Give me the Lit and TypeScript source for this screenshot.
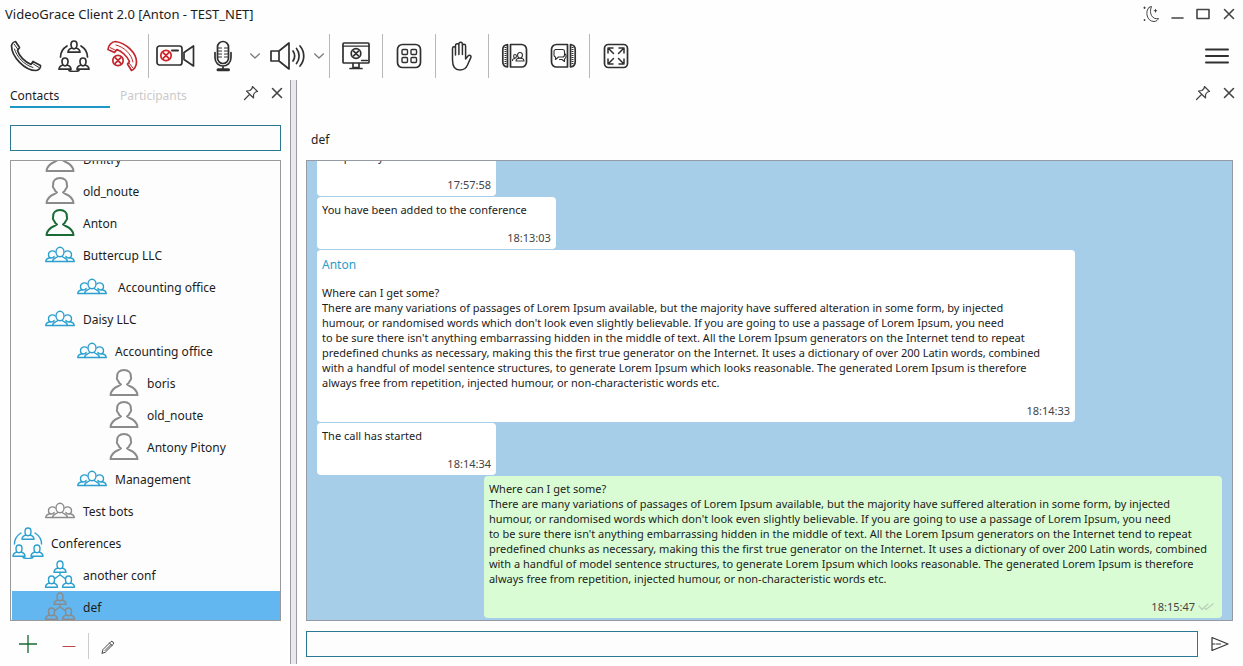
import { LitElement, html, svg, css } from "lit";
import { customElement, state } from "lit/decorators.js";
import { classMap } from "lit/directives/class-map.js";

/* A small head-and-shoulders figure; (x, y) is the top centre of the head. */
const bust = (x: number, y: number) => svg`
  <path d="M${x} ${y}c2 0 3 1.5 3 3.6c0 2.2-1.2 4.2-3 4.2s-3-2-3-4.2c0-2.1 1-3.6 3-3.6z
  M${x - 2} ${y + 7}c-2.200.500-3.800 1.400-4 4.200h12c-.2-2.800-1.800-3.700-4-4.200"/>`;

const cross = (x: number, y: number, r: number) => svg`
  <circle cx=${x} cy=${y} r=${r}/>
  <path d="M${x - r / 2} ${y - r / 2}l${r} ${r}m0 ${-r}l${-r} ${r}"/>`;

const icons: Record<string, [number, number, unknown]> = {
  call: [32, 32, svg`<path d="M5.500 1.500L9.500 7.500L7.500 10.500C9 16 15 22 21 24.500L23 21.500L30.500 25.500C31 27.500 29 30.500 26 30.500C15 30.500 1.500 17 1.500 5.500C2 3.500 4 1.500 5.500 1.500z"/><path stroke-width="1" d="M4.500 9C6.500 16.500 14 25 23 27.500M4 4L8 9.500M22.500 23.500L29 27.500"/>`],
  conference: [32, 32, svg`${bust(16, 1)}${bust(7, 18)}${bust(25, 18)}<path d="M9 6C5 8.500 2.500 12 2.500 17M23 6C27 8.500 29.500 12 29.500 17M11 30.500C14 31.800 18 31.800 21 30.500"/>`],
  hangup: [32, 32, svg`<path d="M2 9.500C2 5.500 6 1.500 9.500 1.500C20 3 30.500 13 30.500 22C30.500 26 28 30 25.500 30.500L21.500 24L23.500 21.500C21 16 15.500 11 11 9.500L8.500 12.500z"/><path stroke-width="1" d="M10 5C18 7 25.500 14 27 22M4 7.500L10 10.500M23 23L27 28"/>${cross(12, 20.500, 5.200)}`],
  camera: [40, 32, svg`<rect x="2" y="6" width="25" height="19" rx="2.500"/><path d="M29 12.500L38.500 6V26L29 19.500z"/><path stroke-width="2" d="M17 10.500h6"/><g stroke="#cf2329">${cross(11, 15.500, 5.200)}</g>`],
  mic: [32, 32, svg`<rect x="10.500" y="1.500" width="11" height="22" rx="5.500"/><path d="M8 12.500v5C8 23 12 26 16 26S24 23 24 17.500V12.500M16 26V30"/><path stroke-width="1.200" d="M11 8h3.500M11 11h3.500M11 14h3.500M11 17h3.500M17.500 8H21M17.500 11H21M17.500 14H21M17.500 17H21"/><path stroke-width="3" d="M11 29.800h10.500"/>`],
  speaker: [36, 32, svg`<path d="M2 11h8L20 3v26L10 21H2zM10 11v10M24 11C26 14 26 18 24 21M27.500 8.500C31 13 31 19 27.500 23.500M31 6C36 12 36 20 31 26"/>`],
  chevron: [10, 6, svg`<path d="M.5 .8L5 5L9.500 .8"/>`],
  screen: [32, 32, svg`<rect x="3" y="3" width="26" height="20" rx="1"/><path d="M3 6.200h26" stroke-width="1.200"/><path d="M13 23.500v4h6v-4M10 28.500h12"/><path stroke-width="1.400" d="M21.500 20.500h6"/>${cross(16, 13.500, 4.800)}`],
  grid: [32, 32, svg`<rect x="4.500" y="4.500" width="23" height="23" rx="5"/><g stroke-width="1.400"><rect x="9" y="9.500" width="5.500" height="5" rx="1"/><rect x="18" y="9.500" width="5.500" height="5" rx="1"/><rect x="9" y="17.500" width="5.500" height="5" rx="1"/><rect x="18" y="17.500" width="5.500" height="5" rx="1"/></g>`],
  hand: [32, 32, svg`<path stroke-width="1.500" d="M6.500 20V8.500c0-2.200 3-2.200 3 0V15V5.500c0-2.400 3.400-2.400 3.400 0V14.500V4c0-2.400 3.500-2.400 3.500 0v10.500V6c0-2.300 3.200-2.300 3.200 0v13l2.200-2.800c1.400-1.600 4-.8 3 1.400L21.500 25c-1.500 3.500-4 5-7.500 5c-5 0-7.500-4-7.500-10z"/>`],
  book: [32, 32, svg`<path d="M11.500 4.500H22.500a5 5 0 0 1 5 5v12.500a5 5 0 0 1-5 5H11.500zM8.500 4.500C5 5 3.800 7 3.800 9.500v12.500C3.800 24.500 5 26.500 8.500 27z"/><path stroke-width="2" stroke-linecap="butt" stroke-dasharray="1 1" d="M6.500 7v18"/><path stroke-width="1.100" d="M21 12.500c3.500 0 3 5.500 0 5.500s-3.500-5.500 0-5.500zM17 21c0-2 1.500-2.800 4-2.800s4 .8 4 2.800zM16 14.500c2 0 1.800 3.500 0 3.500s-1.800-3.500 0-3.500zM13.500 20.500c0-1.200.8-2 2.500-2"/>`],
  chat: [32, 32, svg`<path d="M20.500 4.500H9.500a5 5 0 0 0-5 5v12.500a5 5 0 0 0 5 5h11zM23.500 4.500C27 5 28.200 7 28.200 9.500v12.500C28.200 24.500 27 26.500 23.500 27z"/><path stroke-width="2" stroke-linecap="butt" stroke-dasharray="1 1" d="M25.500 7v18"/><path stroke-width="1.100" d="M8.500 9.500h7a2 2 0 0 1 2 2v3.500a2 2 0 0 1-2 2H11.500l-3 2.500V17a2 2 0 0 1-1.500-2v-3.500a2 2 0 0 1 1.500-2zM17.500 13.500c2.200.5 2 5 0 5.500v2.500l-2.500-2h-2.500"/>`],
  expand: [32, 32, svg`<rect x="4.500" y="4.500" width="23" height="23" rx="4"/><path stroke-width="1.500" d="M13.500 13.500L8 8M8 13V8h5M18.500 13.500L24 8M19 8h5v5M13.500 18.500L8 24M8 19v5h5M18.500 18.500L24 24M24 19v5h-5"/>`],
  menu: [24, 16, svg`<path d="M1 1.500h22M1 8h22M1 14.500h22"/>`],
  moon: [18, 18, svg`<path d="M7 2.500C2.500 6.500 5 16.500 12 16.500C14.500 16.500 16 14.800 16.500 13.500C10.500 15 6.500 8.500 9.500 1.500C8.500 1.600 7.600 2 7 2.500M2.500 2v1.500M1.800 2.800h1.500M13.500 4.500v2.500M12.200 5.700h2.500M2.500 14.500v1M2 15h1"/>`],
  minimize: [14, 14, svg`<path d="M2 11h11"/>`],
  maximize: [14, 14, svg`<rect x="1" y="2.500" width="12" height="9"/>`],
  close: [14, 14, svg`<path d="M2.500 2.500L11.500 11.500M11.500 2.500L2.500 11.500"/>`],
  pin: [16, 16, svg`<path d="M9.500 1.500L14.500 6.500L12.500 7L10.500 9.500L10.500 13L3.500 6L7 5.500L9 3.500zM6.500 9.500L1.500 14.500"/>`],
  user: [32, 32, svg`<path d="M16 3c4.800 0 7 3 6.800 6.200c0 1.300.7 1.300.2 2.800c-.4 1.200-.8 1-1.300 2.200C21 16 20 17 19 17.500c1.500 2 9.500 2 10.500 10.500h-27C3.500 19.500 11.500 19.500 13 17.500C12 17 11 16 10.300 14.200C9.800 13 9.400 13.200 9 12c-.5-1.500.2-1.500.2-2.800C9 6 11.200 3 16 3z"/>`],
  group: [32, 32, svg`<ellipse cx="16" cy="13" rx="4" ry="4.800"/><path d="M13.500 17.500c0 1.500-4.500 1-5 5h15c-.5-4-5-3.500-5-5"/><path d="M11 12.800C9 11 4.500 12 4.500 15.500c0 2 1.300 3.500 3 3.500c1.200 0 2-.6 2.600-1.600M6 18.800c-2.500.4-4 1-4.300 3.700h6.800M21 12.800C23 11 27.500 12 27.500 15.500c0 2-1.300 3.500-3 3.500c-1.200 0-2-.6-2.600-1.600M26 18.800c2.500.4 4 1 4.300 3.700h-6.800"/>`],
  room: [32, 32, svg`${bust(16, 2)}${bust(7.500, 17)}${bust(24.500, 17)}<path d="M16 13.500V16M15 16.500l-4 3M17 16.500l4 3" stroke-dasharray="2.500 1"/>`],
  add: [18, 18, svg`<path d="M0 9h18M9 0v18"/>`],
  remove: [14, 14, svg`<path d="M1 7.500h12"/>`],
  edit: [14, 14, svg`<path d="M1 13L2 9.500L10 1.500C11 .5 13.500 3 12.500 4L4.500 12zM8.500 3l2.500 2.500M4 10.500L10 4.500"/>`],
  send: [18, 16, svg`<path d="M1 1.500L17 8L1 14.500zM1 8h3M5.500 8h4"/>`],
  ticks: [16, 8, svg`<path d="M1 3l3 3.500L10 1M7 5.500L8 6.500L15 1"/>`],
};

const icon = (name: string) => {
  const [w, h, art] = icons[name];
  return html`<svg class="icon ${name}" width=${w} height=${h} viewBox="0 0 ${w} ${h}" aria-hidden="true">${art}</svg>`;
};

interface Entry { level: number; icon: string; tone: string; label: string; }
interface Message { author?: string; text: string; time: string; own?: boolean; }

const entries: Entry[] = [
  { level: 1, icon: "user", tone: "gray", label: "Dmitry" },
  { level: 1, icon: "user", tone: "gray", label: "old_noute" },
  { level: 1, icon: "user", tone: "green", label: "Anton" },
  { level: 1, icon: "group", tone: "blue", label: "Buttercup LLC" },
  { level: 2, icon: "group", tone: "blue", label: " Accounting office" },
  { level: 1, icon: "group", tone: "blue", label: "Daisy LLC" },
  { level: 2, icon: "group", tone: "blue", label: "Accounting office" },
  { level: 3, icon: "user", tone: "gray", label: "boris" },
  { level: 3, icon: "user", tone: "gray", label: "old_noute" },
  { level: 3, icon: "user", tone: "gray", label: "Antony Pitony" },
  { level: 2, icon: "group", tone: "blue", label: "Management" },
  { level: 1, icon: "group", tone: "gray", label: "Test bots" },
  { level: 0, icon: "conference", tone: "blue", label: "Conferences" },
  { level: 1, icon: "room", tone: "blue", label: "another conf" },
  { level: 1, icon: "room", tone: "gray", label: "def" },
];

const passage = `Where can I get some?
There are many variations of passages of Lorem Ipsum available, but the majority have suffered alteration in some form, by injected
humour, or randomised words which don't look even slightly believable. If you are going to use a passage of Lorem Ipsum, you need
to be sure there isn't anything embarrassing hidden in the middle of text. All the Lorem Ipsum generators on the Internet tend to repeat
predefined chunks as necessary, making this the first true generator on the Internet. It uses a dictionary of over 200 Latin words, combined
with a handful of model sentence structures, to generate Lorem Ipsum which looks reasonable. The generated Lorem Ipsum is therefore
always free from repetition, injected humour, or non-characteristic words etc.`;

const messages: Message[] = [
  { text: "Temporarily", time: "17:57:58" },
  { text: "You have been added to the conference", time: "18:13:03" },
  { author: "Anton", text: passage, time: "18:14:33" },
  { text: "The call has started", time: "18:14:34" },
  { text: passage, time: "18:15:47", own: true },
];

@customElement("app-root")
export class AppRoot extends LitElement {
  @state() private selected = entries.length - 1;

  static styles = css`
    :host {
      display: flex;
      flex-direction: column;
      height: 100vh;
      overflow: hidden;
      background: #fefefe;
      color: #1c1c1c;
      font: 12px/16px "Noto Sans", "Open Sans", sans-serif;
    }
    * { box-sizing: border-box; }
    button {
      display: flex;
      align-items: center;
      justify-content: center;
      padding: 0;
      border: 0;
      background: none;
      color: inherit;
      font: inherit;
    }
    .icon { display: block; flex: none; fill: none; stroke: currentColor; stroke-width: 1.7; stroke-linecap: round; stroke-linejoin: round; }
    .chevron { stroke-width: 1.2; color: #777; }
    .minimize, .maximize, .close { stroke-width: 1.6; }
    .pin, .send { stroke-width: 1.2; }
    .moon, .edit, .remove { stroke-width: 1; }
    .add, .ticks { stroke-width: 1.3; }
    .menu { stroke-width: 2; }

    .titlebar { display: flex; align-items: center; height: 28px; flex: none; padding: 0 1px 0 5px; }
    .title { flex: 1; margin: 0; font: inherit; font-size: 13px; }
    .small { width: 26px; height: 26px; color: #444; }

    .toolbar { display: flex; align-items: center; height: 52px; flex: none; padding: 4px 2px 0; color: #303030; }
    .tool { width: 48px; height: 48px; }
    .drop { width: 16px; height: 48px; }
    .hang { color: #c0262c; }
    .rule { width: 1px; height: 44px; margin: 0 2px; background: #b8b8b8; }
    .spacer { flex: 1; }

    .main { display: grid; grid-template-columns: 290px 7px minmax(0, 1fr); flex: 1; min-height: 0; }
    .panel { display: flex; flex-direction: column; min-width: 0; min-height: 0; }
    .splitter { margin-bottom: 2px; border: solid #9c9ca2; border-width: 0 1px; background: #e9e9ee; }
    .head { display: flex; height: 28px; flex: none; }
    .head.left { padding-left: 10px; }
    .head.right { padding-right: 1px; justify-content: flex-end; }
    .tabs { display: flex; flex: 1; gap: 10px; }
    .tab { width: 100px; justify-content: flex-start; border-bottom: 2px solid transparent; padding-top: 6px; }
    .tab.on { border-color: #1f97c4; }
    .tab.off { color: #cacaca; }
    .field { height: 26px; border: 1px solid #2b7890; background: #fdfdfe; padding: 0 5px; font: inherit; color: inherit; outline: none; min-width: 0; }
    .search { margin: 17px 9px 9px 10px; flex: none; }

    .tree {
      flex: 1;
      min-height: 0;
      margin: 0 9px 0 10px;
      padding: 0 0 0 1px;
      border: 1px solid #9a9a9a;
      background: #fdfdfd;
      list-style: none;
      overflow: auto;
      scrollbar-width: none;
    }
    .row { width: 100%; height: 32px; justify-content: flex-start; gap: 7px; white-space: pre; }
    .row.on { background: #62b7f1; }
    .indent { display: flex; }
    .label { padding-top: 2px; }
    .gray { color: #8b8b8b; }
    .green { color: #1a6b36; }
    .blue { color: #2ba0cf; }
    .row .icon { stroke-width: 1.4; }
    .row .user { stroke-width: 2; }

    .actions { display: flex; align-items: center; height: 45px; flex: none; padding-left: 9px; }
    .action { width: 38px; height: 44px; }
    .action.plus { color: #14692f; }
    .action.minus { width: 42px; padding: 4px 0 0 2px; color: #b8474b; }
    .actions .rule { height: 26px; margin: 5px 0 0 -1px; background: #ccc; }
    .action.pen { padding-top: 6px; color: #444; }

    .topic { height: 52px; flex: none; margin: 0; padding: 24px 14px 0; font: inherit; }
    .chatlog {
      flex: 1;
      min-height: 0;
      margin: 0 10px 0 9px;
      padding: 3px 10px 2px;
      border: 1px solid #969ba3;
      background: #a6cee8;
      display: flex;
      flex-direction: column;
      align-items: flex-start;
      gap: 1px;
      overflow: auto;
      scrollbar-width: none;
      font-size: 11px;
      line-height: 15px;
    }
    .message { flex: none; min-width: 179px; padding: 5px 5px 4px; border-radius: 4px; background: #fff; }
    .message.own { align-self: flex-end; padding-right: 8px; background: #dafcd5; }
    .author { margin: 2px 0 13px; font-size: 12px; color: #2b9cca; }
    .text { margin: 0 24px 13px 0; white-space: pre; }
    .author + .text { margin-right: 30px; }
    .own .text { margin-right: 7px; }
    .time { display: flex; align-items: center; justify-content: flex-end; gap: 3px; color: #444; }
    .ticks { color: #b9d2b9; }
    .composer { display: flex; align-items: center; height: 45px; flex: none; padding: 0 10px 0 9px; }
    .composer .field { flex: 1; }
    .sender { width: 35px; height: 26px; padding-left: 8px; color: #333; }
  `;

  protected firstUpdated() {
    const tree = this.renderRoot.querySelector(".tree")!;
    tree.scrollTop = 18;
    const log = this.renderRoot.querySelector(".chatlog")!;
    log.scrollTop = log.scrollHeight;
  }

  private button(name: string, label: string, kind = "tool") {
    return html`<button class=${kind} aria-label=${label}>${icon(name)}</button>`;
  }

  private renderEntry(e: Entry, i: number) {
    return html`<li>
      <button class=${classMap({ row: true, on: i === this.selected })} @click=${() => (this.selected = i)}><span class="indent ${e.tone}" style="padding-left:${e.level * 32}px">${icon(e.icon)}</span><span class="label">${e.label}</span></button>
    </li>`;
  }

  private renderMessage(m: Message) {
    return html`<article class=${classMap({ message: true, own: !!m.own })}>
      ${m.author ? html`<p class="author">${m.author}</p>` : null}
      <p class="text">${m.text}</p>
      <div class="time"><time>${m.time}</time>${m.own ? icon("ticks") : null}</div>
    </article>`;
  }

  render() {
    const rule = html`<span class="rule"></span>`;
    return html`
      <header class="titlebar">
        <h1 class="title">VideoGrace Client 2.0 [Anton - TEST_NET]</h1>
        ${this.button("moon", "Dark theme", "small")}
        ${this.button("minimize", "Minimize", "small")}
        ${this.button("maximize", "Maximize", "small")}
        ${this.button("close", "Close", "small")}
      </header>
      <nav class="toolbar" aria-label="Call controls">
        ${this.button("call", "Call")}
        ${this.button("conference", "Conference")}
        ${this.button("hangup", "Hang up", "tool hang")}
        ${rule}
        ${this.button("camera", "Camera")}
        ${this.button("mic", "Microphone")}
        ${this.button("chevron", "Microphone options", "drop")}
        ${this.button("speaker", "Speaker")}
        ${this.button("chevron", "Speaker options", "drop")}
        ${rule}
        ${this.button("screen", "Share screen")}
        ${rule}
        ${this.button("grid", "Layout")}
        ${rule}
        ${this.button("hand", "Raise hand")}
        ${rule}
        ${this.button("book", "Contacts panel")}
        ${this.button("chat", "Chat panel")}
        ${rule}
        ${this.button("expand", "Full screen")}
        <span class="spacer"></span>
        ${this.button("menu", "Menu")}
      </nav>
      <main class="main">
        <section class="panel" aria-label="Contacts">
          <div class="head left">
            <div class="tabs" role="tablist">
              <button class="tab on" role="tab" aria-selected="true">Contacts</button>
              <button class="tab off" role="tab" aria-selected="false">Participants</button>
            </div>
            ${this.button("pin", "Pin contacts", "small")}
            ${this.button("close", "Close contacts", "small")}
          </div>
          <input class="field search" type="text" aria-label="Search contacts" />
          <ul class="tree">${entries.map((e, i) => this.renderEntry(e, i))}</ul>
          <div class="actions">
            ${this.button("add", "Add contact", "action plus")}
            ${this.button("remove", "Remove contact", "action minus")}
            ${rule}
            ${this.button("edit", "Edit contact", "action pen")}
          </div>
        </section>
        <div class="splitter"></div>
        <section class="panel" aria-label="Chat">
          <div class="head right">
            ${this.button("pin", "Pin chat", "small")}
            ${this.button("close", "Close chat", "small")}
          </div>
          <h2 class="topic">def</h2>
          <div class="chatlog">${messages.map((m) => this.renderMessage(m))}</div>
          <div class="composer">
            <input class="field" type="text" aria-label="Message" />
            ${this.button("send", "Send", "sender")}
          </div>
        </section>
      </main>
    `;
  }
}
